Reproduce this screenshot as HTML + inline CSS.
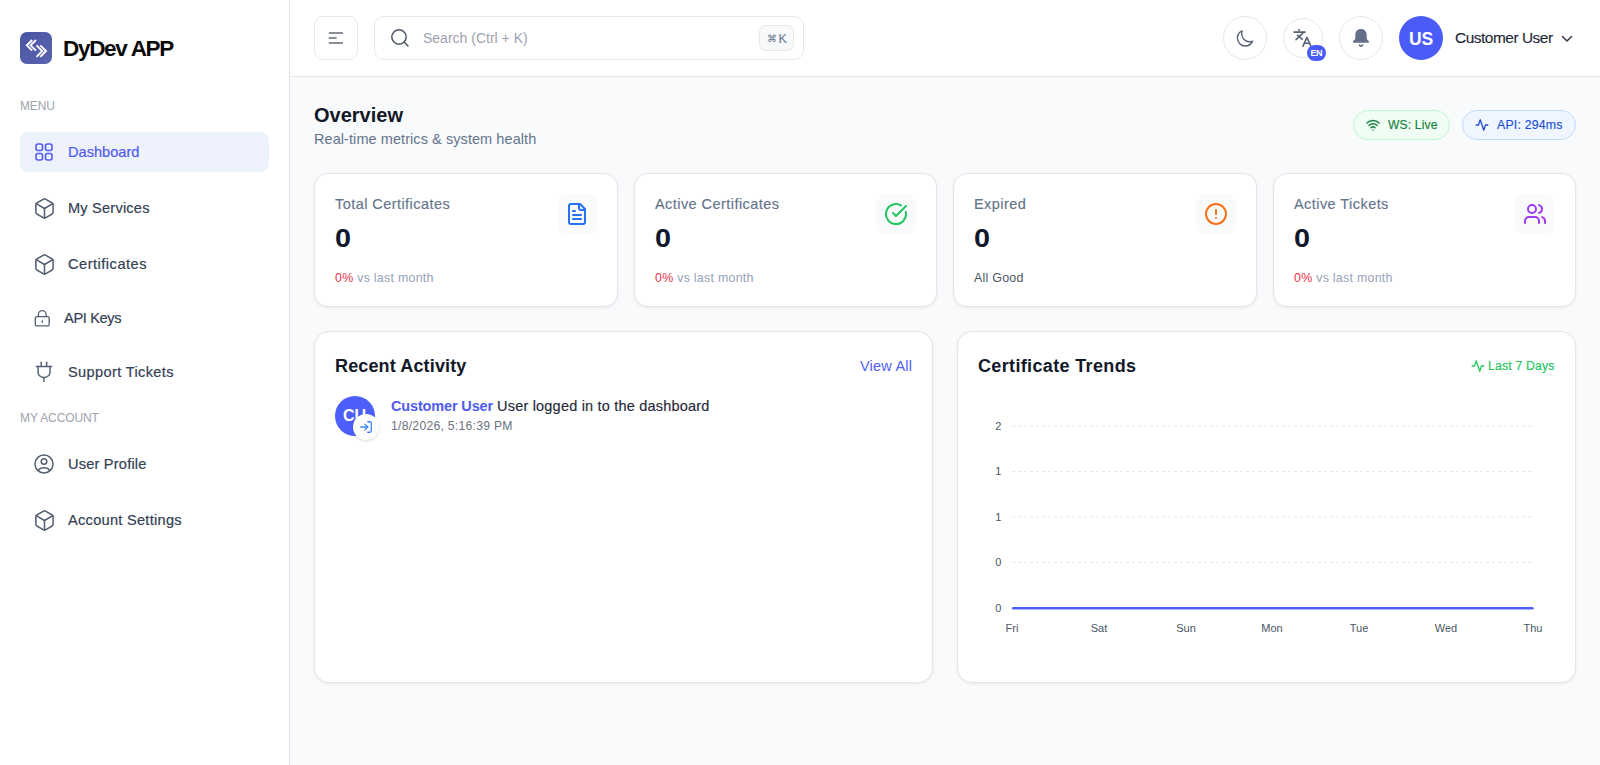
<!DOCTYPE html>
<html><head><meta charset="utf-8">
<style>
*{box-sizing:border-box;margin:0;padding:0}
html,body{width:1600px;height:765px;overflow:hidden;background:#f9fafb;font-family:"Liberation Sans",sans-serif;color:#1f2937}
.abs{position:absolute}
svg{display:block}
#side{position:absolute;left:0;top:0;width:290px;height:765px;background:#fff;border-right:1px solid #e3e5ec}
#head{position:absolute;left:290px;top:0;width:1310px;height:77px;background:#fff;border-bottom:1px solid #e5e7eb}
.logo{left:20px;top:32px;width:32px;height:32px;border-radius:7px;background:linear-gradient(135deg,#4a56a3,#5b63b0)}
.brand{left:63px;top:35.5px;font-size:22.5px;font-weight:bold;color:#0b0b0b;letter-spacing:-1.3px;line-height:26px}
.sec{left:20px;font-size:12px;color:#9ca3af;line-height:14px;letter-spacing:0.1px}
.item{left:20px;width:249px;height:40px;border-radius:8px}
.item.active{background:#edf2fd}
.ico{position:absolute}
.lbl{position:absolute;font-size:14.6px;color:#334155;line-height:18px;white-space:nowrap;-webkit-text-stroke:0.2px currentColor}
.card{position:absolute;background:#fff;border:1px solid #e3e5ea;border-radius:14px;box-shadow:0 1px 3px rgba(0,0,0,.07)}
.panel{position:absolute;background:#fff;border:1px solid #e3e5ea;border-radius:15px;box-shadow:0 1px 3px rgba(0,0,0,.07)}
.ctitle{position:absolute;left:20px;top:21.2px;font-size:14.5px;letter-spacing:0.44px;color:#64748b;-webkit-text-stroke:0.15px currentColor;line-height:18px;white-space:nowrap}
.cval{position:absolute;left:20px;top:50px;font-size:25px;font-weight:bold;color:#0f172a;line-height:28px;transform:scaleX(1.15);transform-origin:0 0}
.cfoot{position:absolute;left:20px;top:97px;font-size:12.4px;letter-spacing:0.27px;color:#94a3b8;line-height:14px;white-space:nowrap}
.cfoot b{font-weight:normal;color:#f02d45}
.cico{position:absolute;right:20px;top:20px;width:40px;height:40px;border-radius:10px;background:#f8fafc}
.cico svg{position:absolute;left:8px;top:8px}
.axl{position:absolute;font-size:11px;color:#4b5563;line-height:12px;white-space:nowrap}
</style></head><body>
<div id="side">
  <div class="abs logo">
    <svg width="32" height="32" viewBox="0 0 32 32" fill="none" stroke="#fff" stroke-width="1.9" stroke-linecap="butt" stroke-linejoin="miter">
      <path d="M12.2 8 L6.8 13.3 L12.2 18.7"/><path d="M16 8 L10.6 13.3 L16 18.7"/>
      <path d="M20.3 13.3 L26 19 L20.3 24.8"/><path d="M16.5 13.3 L22.2 19 L16.5 24.8"/>
    </svg>
  </div>
  <div class="abs brand">DyDev APP</div>

  <div class="abs sec" style="top:99px;letter-spacing:-0.15px">MENU</div>
  <div class="abs item active" style="top:132px"></div>
  <svg class="ico" style="left:35px;top:143px" width="18" height="18" viewBox="0 0 18 18" fill="none" stroke="#4f5bf0" stroke-width="1.6">
    <rect x="1" y="1" width="6.5" height="6.5" rx="2"/><rect x="10.5" y="1" width="6.5" height="6.5" rx="2"/>
    <rect x="1" y="10.5" width="6.5" height="6.5" rx="2"/><rect x="10.5" y="10.5" width="6.5" height="6.5" rx="2"/>
  </svg>
  <div class="lbl" style="left:68px;top:143px;color:#4f5bf0">Dashboard</div>

  <svg class="ico" style="left:32.5px;top:196.5px" width="23" height="23" viewBox="0 0 24 24" fill="none" stroke="#556072" stroke-width="1.6" stroke-linecap="round" stroke-linejoin="round">
    <path d="M21 8a2 2 0 0 0-1-1.73l-7-4a2 2 0 0 0-2 0l-7 4A2 2 0 0 0 3 8v8a2 2 0 0 0 1 1.73l7 4a2 2 0 0 0 2 0l7-4A2 2 0 0 0 21 16Z"/><path d="m3.3 7 8.7 5 8.7-5"/><path d="M12 22V12"/>
  </svg>
  <div class="lbl" style="left:68px;top:199px;letter-spacing:0.2px">My Services</div>

  <svg class="ico" style="left:32.5px;top:252.5px" width="23" height="23" viewBox="0 0 24 24" fill="none" stroke="#556072" stroke-width="1.6" stroke-linecap="round" stroke-linejoin="round">
    <path d="M21 8a2 2 0 0 0-1-1.73l-7-4a2 2 0 0 0-2 0l-7 4A2 2 0 0 0 3 8v8a2 2 0 0 0 1 1.73l7 4a2 2 0 0 0 2 0l7-4A2 2 0 0 0 21 16Z"/><path d="m3.3 7 8.7 5 8.7-5"/><path d="M12 22V12"/>
  </svg>
  <div class="lbl" style="left:68px;top:255px;letter-spacing:0.5px">Certificates</div>

  <svg class="ico" style="left:32.75px;top:308.75px" width="18.5" height="18.5" viewBox="0 0 24 24" fill="none" stroke="#556072" stroke-width="1.7" stroke-linecap="round" stroke-linejoin="round">
    <rect x="3" y="10" width="18" height="12" rx="2"/><path d="M7 10V7a5 5 0 0 1 10 0v3"/><path d="M12 15.6v1.4" stroke-width="2"/>
  </svg>
  <div class="lbl" style="left:64px;top:309px;letter-spacing:-0.35px">API Keys</div>

  <svg class="ico" style="left:30px;top:358px" width="28" height="28" viewBox="0 0 28 28" fill="none" stroke="#556072" stroke-width="1.45" stroke-linecap="round" stroke-linejoin="round">
    <path d="M11.2 4.2V8.4"/><path d="M16.65 4.2V8.4"/><path d="M6.3 8.4H21.7"/><path d="M8.1 8.4V14.4C8.1 17.4 10.9 19.4 13.9 19.4C16.9 19.4 20 17.4 20 14.4V8.4"/><path d="M13.9 19.4V23.6"/>
  </svg>
  <div class="lbl" style="left:68px;top:363px;letter-spacing:0.35px">Support Tickets</div>

  <div class="abs sec" style="top:411px;letter-spacing:-0.1px">MY ACCOUNT</div>

  <svg class="ico" style="left:34px;top:454px" width="20" height="20" viewBox="0 0 20 20" fill="none" stroke="#556072" stroke-width="1.5">
    <circle cx="10" cy="10" r="9"/><circle cx="10" cy="7.5" r="2.8"/><path d="M4.2 16.5 A6.5 5 0 0 1 15.8 16.5"/>
  </svg>
  <div class="lbl" style="left:68px;top:455px;letter-spacing:0.2px">User Profile</div>

  <svg class="ico" style="left:32.5px;top:508.5px" width="23" height="23" viewBox="0 0 24 24" fill="none" stroke="#556072" stroke-width="1.6" stroke-linecap="round" stroke-linejoin="round">
    <path d="M21 8a2 2 0 0 0-1-1.73l-7-4a2 2 0 0 0-2 0l-7 4A2 2 0 0 0 3 8v8a2 2 0 0 0 1 1.73l7 4a2 2 0 0 0 2 0l7-4A2 2 0 0 0 21 16Z"/><path d="m3.3 7 8.7 5 8.7-5"/><path d="M12 22V12"/>
  </svg>
  <div class="lbl" style="left:68px;top:511px;letter-spacing:0.27px">Account Settings</div>
</div>

<div id="head"></div>
<div class="abs" style="left:314px;top:16px;width:44px;height:44px;border:1px solid #e5e7eb;border-radius:9px;background:#fff"></div>
<svg class="ico" style="left:328px;top:31px" width="16" height="14" viewBox="0 0 16 14" stroke="#6b7280" stroke-width="1.6" stroke-linecap="butt">
  <path d="M0.8 2 H15"/><path d="M0.8 7 H8.6"/><path d="M0.8 12 H15"/>
</svg>
<div class="abs" style="left:374px;top:16px;width:430px;height:44px;border:1px solid #e5e7eb;border-radius:10px;background:#fff"></div>
<svg class="ico" style="left:390px;top:28px" width="20" height="20" viewBox="0 0 20 20" fill="none" stroke="#4b5563" stroke-width="1.5" stroke-linecap="round">
  <circle cx="9" cy="9" r="7.2"/><path d="M14.3 14.3 L18 18"/>
</svg>
<div class="abs" style="left:423px;top:30px;font-size:14px;line-height:16px;color:#9ca3af;white-space:nowrap">Search (Ctrl + K)</div>
<div class="abs" style="left:759px;top:24.5px;width:35px;height:26.5px;border:1px solid #e5e7eb;border-radius:7px;background:#f8f9fb"></div>
<div class="abs" style="left:766.5px;top:32.5px;font-size:9.5px;line-height:12px;color:#64748b">&#8984;</div><div class="abs" style="left:778.5px;top:32px;font-size:12.5px;line-height:14px;color:#64748b">K</div>

<div class="abs" style="left:1223px;top:16px;width:44px;height:44px;border:1px solid #e5e7eb;border-radius:50%;background:#fff"></div>
<svg class="ico" style="left:1234.8px;top:28.8px" width="19.4" height="19.4" viewBox="0 0 24 24" fill="none" stroke="#566073" stroke-width="1.65" stroke-linecap="round" stroke-linejoin="round">
  <path d="M21.752 15.002A9.72 9.72 0 0 1 18 15.75c-5.385 0-9.75-4.365-9.75-9.75 0-1.33.266-2.597.748-3.752A9.753 9.753 0 0 0 3 11.25C3 16.635 7.365 21 12.75 21a9.753 9.753 0 0 0 9.002-5.998Z"/>
</svg>

<div class="abs" style="left:1283px;top:18px;width:40px;height:40px;border:1px solid #e5e7eb;border-radius:50%;background:#fff"></div>
<svg class="ico" style="left:1293px;top:28px" width="20" height="20" viewBox="0 0 20 20" fill="none" stroke="#566073" stroke-width="1.55" stroke-linecap="round" stroke-linejoin="round">
  <path d="M1 4.1 H12.2"/><path d="M6.1 1.6 V2.8"/><path d="M9.6 5.4 L3 11.6"/><path d="M4.5 7.2 L9.3 11.3"/>
  <path d="M9.9 18.4 L13.9 9.4 L17.9 18.4"/><path d="M11.4 15.2 H16.4"/>
</svg>
<div class="abs" style="left:1307px;top:45px;width:19px;height:16px;border-radius:8px;background:#4a5cf7;color:#fff;font-size:9px;font-weight:bold;line-height:16px;text-align:center;letter-spacing:-0.6px;text-indent:-0.5px">EN</div>

<div class="abs" style="left:1339px;top:16px;width:44px;height:44px;border:1px solid #e5e7eb;border-radius:50%;background:#fff"></div>
<svg class="ico" style="left:1347px;top:24px" width="28" height="28" viewBox="0 0 28 28">
  <path fill="#64708a" d="M14 4.9C10.4 4.9 8.3 7.6 8.3 11V14C8.3 15.1 7.5 16 6.5 16.8C5.5 17.5 5.8 18.7 7 18.7H21C22.2 18.7 22.5 17.5 21.5 16.8C20.5 16 19.7 15.1 19.7 14V11C19.7 7.6 17.6 4.9 14 4.9Z"/>
  <path fill="none" stroke="#64708a" stroke-width="1.7" stroke-linecap="round" d="M12.4 21.1C13.3 22.4 14.7 22.4 15.6 21.1"/>
</svg>

<div class="abs" style="left:1399px;top:16px;width:44px;height:44px;border-radius:50%;background:#4a5cf7;color:#fff;font-size:17.5px;font-weight:bold;line-height:46px;letter-spacing:-0.2px;text-align:center">US</div>
<div class="abs" style="left:1455px;top:29px;font-size:15.4px;letter-spacing:-0.45px;line-height:17px;color:#1f2937;-webkit-text-stroke:0.15px currentColor;white-space:nowrap">Customer User</div>
<svg class="ico" style="left:1561px;top:34px" width="12" height="10" viewBox="0 0 12 10" fill="none" stroke="#374151" stroke-width="1.6" stroke-linecap="round" stroke-linejoin="round">
  <path d="M1.5 2.5 L6 7 L10.5 2.5"/>
</svg>

<!-- MAIN -->
<div class="abs" style="left:314px;top:103px;font-size:20px;font-weight:bold;color:#111827;line-height:24px;white-space:nowrap">Overview</div>
<div class="abs" style="left:314px;top:131px;font-size:14.5px;letter-spacing:0.07px;color:#64748b;line-height:17px;white-space:nowrap">Real-time metrics &amp; system health</div>

<div class="abs" style="left:1353px;top:110px;width:97px;height:30px;border:1px solid #bbf7d0;border-radius:15px;background:#f0fdf4"></div>
<svg class="ico" style="left:1366px;top:119px" width="14" height="12" viewBox="0 0 14 12" fill="none" stroke="#15803d" stroke-width="1.5" stroke-linecap="round">
  <path d="M1 4 A8.5 8.5 0 0 1 13 4"/><path d="M3 6.4 A5.6 5.6 0 0 1 11 6.4"/><path d="M5 8.7 A2.8 2.8 0 0 1 9 8.7"/><path d="M7 11 V11"/>
</svg>
<div class="abs" style="left:1388px;top:118px;font-size:12.1px;letter-spacing:0.15px;color:#15803d;-webkit-text-stroke:0.15px #15803d;line-height:14px;white-space:nowrap">WS: Live</div>

<div class="abs" style="left:1462px;top:110px;width:114px;height:30px;border:1px solid #bfdbfe;border-radius:15px;background:#eff6ff"></div>
<svg class="ico" style="left:1475px;top:118px" width="14" height="14" viewBox="0 0 24 24" fill="none" stroke="#1d4ed8" stroke-width="2.2" stroke-linecap="round" stroke-linejoin="round">
  <path d="M22 12h-4l-3 9L9 3l-3 9H2"/>
</svg>
<div class="abs" style="left:1497px;top:118px;font-size:12.3px;letter-spacing:0.2px;color:#1d4ed8;-webkit-text-stroke:0.15px #1d4ed8;line-height:14px;white-space:nowrap">API: 294ms</div>

<!-- CARDS -->
<div class="card" style="left:314px;top:173px;width:304px;height:134px">
  <div class="ctitle">Total Certificates</div>
  <div class="cval">0</div>
  <div class="cfoot"><b>0%</b> vs last month</div>
  <div class="cico"><svg width="24" height="24" viewBox="0 0 24 24" fill="none" stroke="#2672f2" stroke-width="2" stroke-linecap="round" stroke-linejoin="round">
    <path d="M15 2H6a2 2 0 0 0-2 2v16a2 2 0 0 0 2 2h12a2 2 0 0 0 2-2V7Z"/><path d="M14 2v4a2 2 0 0 0 2 2h4"/><path d="M10 9H8"/><path d="M16 13H8"/><path d="M16 17H8"/>
  </svg></div>
</div>
<div class="card" style="left:634px;top:173px;width:303px;height:134px">
  <div class="ctitle">Active Certificates</div>
  <div class="cval">0</div>
  <div class="cfoot"><b>0%</b> vs last month</div>
  <div class="cico"><svg width="24" height="24" viewBox="0 0 24 24" fill="none" stroke="#22c55e" stroke-width="2" stroke-linecap="round" stroke-linejoin="round">
    <path d="M21.801 10A10 10 0 1 1 17 3.335"/><path d="m9 11 3 3L22 4"/>
  </svg></div>
</div>
<div class="card" style="left:953px;top:173px;width:304px;height:134px">
  <div class="ctitle">Expired</div>
  <div class="cval">0</div>
  <div class="cfoot" style="color:#4b5563">All Good</div>
  <div class="cico"><svg width="24" height="24" viewBox="0 0 24 24" fill="none" stroke="#f97316" stroke-width="2" stroke-linecap="round" stroke-linejoin="round">
    <circle cx="12" cy="12" r="10"/><path d="M12 8v4"/><path d="M12 16h.01"/>
  </svg></div>
</div>
<div class="card" style="left:1273px;top:173px;width:303px;height:134px">
  <div class="ctitle">Active Tickets</div>
  <div class="cval">0</div>
  <div class="cfoot"><b>0%</b> vs last month</div>
  <div class="cico"><svg width="24" height="24" viewBox="0 0 24 24" fill="none" stroke="#a03af2" stroke-width="2" stroke-linecap="round" stroke-linejoin="round">
    <path d="M16 21v-2a4 4 0 0 0-4-4H6a4 4 0 0 0-4 4v2"/><circle cx="9" cy="7" r="4"/><path d="M22 21v-2a4 4 0 0 0-3-3.87"/><path d="M16 3.13a4 4 0 0 1 0 7.75"/>
  </svg></div>
</div>

<!-- PANELS -->
<div class="panel" style="left:314px;top:331px;width:619px;height:352px">
  <div class="abs" style="left:20px;top:23px;font-size:18px;letter-spacing:0.14px;font-weight:bold;color:#111827;line-height:22px;white-space:nowrap">Recent Activity</div>
  <div class="abs" style="left:545px;top:26px;font-size:14.5px;letter-spacing:0.2px;color:#4f5ef5;line-height:17px;white-space:nowrap">View All</div>
  <div class="abs" style="left:20px;top:64px;width:40px;height:40px;border-radius:50%;background:#4c5ffb;color:#fff;font-size:16px;font-weight:bold;line-height:40px;text-align:left;padding-left:8px;overflow:hidden">CU</div>
  <div class="abs" style="left:38px;top:82px;width:26px;height:26px;border-radius:50%;background:#fff;box-shadow:0 1px 3px rgba(0,0,0,.15)"></div>
  <svg class="ico" style="left:44px;top:88px" width="14" height="14" viewBox="0 0 24 24" fill="none" stroke="#3b82f6" stroke-width="2.2" stroke-linecap="round" stroke-linejoin="round">
    <path d="M15 3h4a2 2 0 0 1 2 2v14a2 2 0 0 1-2 2h-4"/><path d="m10 17 5-5-5-5"/><path d="M15 12H3"/>
  </svg>
  <div class="abs" style="left:76px;top:66px;font-size:14.5px;color:#1f2937;line-height:17px;white-space:nowrap"><span style="color:#4f5bf0;font-weight:bold;letter-spacing:-0.15px">Customer User</span> <span style="letter-spacing:0.2px;-webkit-text-stroke:0.15px currentColor">User logged in to the dashboard</span></div>
  <div class="abs" style="left:76px;top:87px;font-size:12.2px;letter-spacing:0.26px;color:#6b7280;line-height:14px;white-space:nowrap">1/8/2026, 5:16:39 PM</div>
</div>

<div class="panel" style="left:957px;top:331px;width:619px;height:352px">
  <div class="abs" style="left:20px;top:23px;font-size:18px;letter-spacing:0.35px;font-weight:bold;color:#111827;line-height:22px;white-space:nowrap">Certificate Trends</div>
  <svg class="ico" style="left:513px;top:27px" width="14" height="14" viewBox="0 0 24 24" fill="none" stroke="#22c55e" stroke-width="2.2" stroke-linecap="round" stroke-linejoin="round">
    <path d="M22 12h-4l-3 9L9 3l-3 9H2"/>
  </svg>
  <div class="abs" style="left:530px;top:27px;font-size:12.3px;letter-spacing:0.15px;color:#22c55e;-webkit-text-stroke:0.15px #22c55e;line-height:14px;white-space:nowrap">Last 7 Days</div>
</div>

<svg class="abs" style="left:957px;top:331px" width="619" height="351" viewBox="957 331 619 351">
  <g stroke="#e5e7eb" stroke-width="1" stroke-dasharray="3 3">
    <path d="M1012 426H1533"/><path d="M1012 471.5H1533"/><path d="M1012 517H1533"/><path d="M1012 562.5H1533"/>
  </g>
  <path d="M1013.3 608.2H1532.4" stroke="#4c5ffb" stroke-width="2.6" stroke-linecap="round"/>
</svg>
<div class="axl" style="left:961.3px;top:420px;width:40px;text-align:right">2</div>
<div class="axl" style="left:961.3px;top:465px;width:40px;text-align:right">1</div>
<div class="axl" style="left:961.3px;top:511px;width:40px;text-align:right">1</div>
<div class="axl" style="left:961.3px;top:556px;width:40px;text-align:right">0</div>
<div class="axl" style="left:961.3px;top:602px;width:40px;text-align:right">0</div>
<div class="axl" style="left:1002px;top:622px;width:20px;text-align:center">Fri</div>
<div class="axl" style="left:1084px;top:622px;width:30px;text-align:center">Sat</div>
<div class="axl" style="left:1171px;top:622px;width:30px;text-align:center">Sun</div>
<div class="axl" style="left:1257px;top:622px;width:30px;text-align:center">Mon</div>
<div class="axl" style="left:1344px;top:622px;width:30px;text-align:center">Tue</div>
<div class="axl" style="left:1431px;top:622px;width:30px;text-align:center">Wed</div>
<div class="axl" style="left:1518px;top:622px;width:30px;text-align:center">Thu</div>
</body></html>
